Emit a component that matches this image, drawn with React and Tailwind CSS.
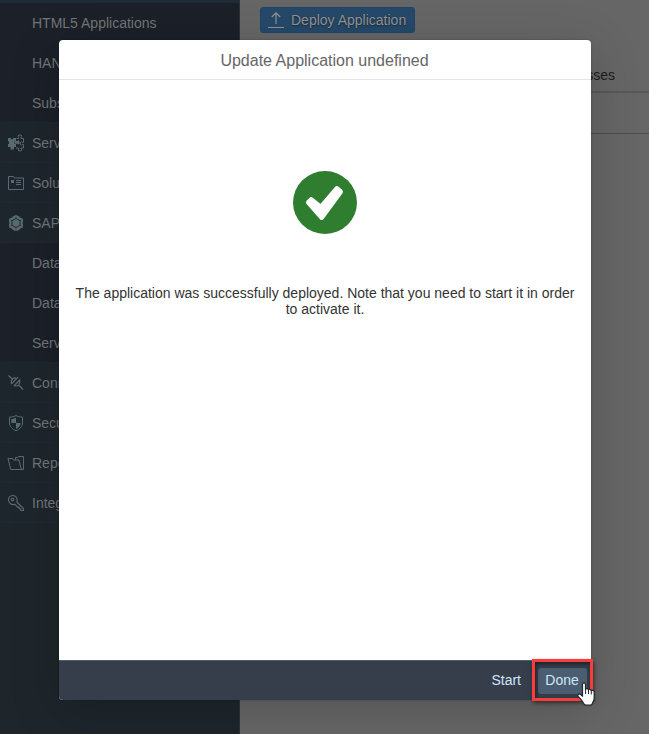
import React from "react";

const PuzzleIcon = () => (
  <svg width="18" height="18" viewBox="0 0 18 18" className="shrink-0">
    <path d="M1 4h3v1.200h2V4h3v3H7.500v3H9v3H7v2.500H3.500V13H1v-3h1V7.500H1z" fill="currentColor" />
    <path d="M9.500 4.500h2.300V3.200l-.9-.9.8-1.300h2.400l.7 1.300-.8.900v1.300h2.500v4h-1.300l-.9-.8-1 .8v2l1 .8.900-.8h1.300V14h-2.500v1l.8.900-.7 1h-2.300l-.8-1 .8-.900v-1H9" fill="none" stroke="currentColor" strokeWidth="1" />
    <path d="M8 7h2.500l.8-.8 1.200 1v2.400l-1.200.900-.8-.7H8z" fill="currentColor" />
  </svg>
);

const SolutionIcon = () => (
  <svg width="18" height="18" viewBox="0 0 18 18" fill="none" stroke="currentColor" className="shrink-0">
    <path d="M1.500 15.500v-13h5l1 1.500h9v11.500z" />
    <path d="M9 6.500h5M9 8.500h5M9 10.500h5" />
    <rect x="4" y="6" width="3" height="3" fill="currentColor" stroke="none" />
  </svg>
);

const HexIcon = () => (
  <svg width="18" height="18" viewBox="0 0 18 18" className="shrink-0">
    <path d="M9 1l3 1.200 1 1.300 3 1.200v3L15.500 9l.5 1.500v2.800l-3 1.400-1 1.300L9 17l-3-1-1-1.300-3-1.400v-2.800L2.500 9 2 7.700v-3l3-1.200 1-1.300z" fill="currentColor" />
    <path d="M9 4.500l4 2.200v4.600l-4 2.200-4-2.200V6.700z" fill="none" stroke="#1c242b" strokeWidth=".9" />
    <path d="M9 4.500V3M13 6.700l1.500-.9M13 11.300l1.500.900M9 13.500V15M5 11.300l-1.500.9M5 6.700l-1.500-.9" stroke="#1c242b" strokeWidth=".7" />
  </svg>
);

const ConnectIcon = () => (
  <svg width="18" height="18" viewBox="0 0 18 18" fill="none" stroke="currentColor" strokeWidth="1.200" className="shrink-0">
    <path d="M1.500 1.500L5 4.700M12.300 11.500l3.700 4" />
    <path d="M11 3.200L4.300 10M13.300 5.500L6.800 12" />
    <path d="M9.300 4.500C7 3 3.500 5 4.500 9.500M7.500 11.500c3.500 1.600 6-1 5-5" />
  </svg>
);

const ShieldIcon = () => (
  <svg width="18" height="18" viewBox="0 0 18 18" className="shrink-0">
    <path d="M9 1.500c2 1.300 4.200 1.600 6.500 1.600V9c0 3.500-2.500 5.800-6.500 7.800C5 14.800 2.500 12.500 2.500 9V3.100c2.300 0 4.500-.3 6.500-1.600z" fill="none" stroke="currentColor" />
    <path d="M9 3.500V9H4.300V5c1.700 0 3.200-.5 4.700-1.500zM9 9h4.700c0 2.600-1.700 4.400-4.700 6z" fill="currentColor" />
  </svg>
);

const FolderIcon = () => (
  <svg width="18" height="18" viewBox="0 0 18 18" fill="none" stroke="currentColor" className="shrink-0">
    <path d="M3.800 15.500L1 4.500h4.500l1 1.500H12l2.300 9.500zM8.500 6V3.500h2.200l.8-1h5v13h-2.200" />
  </svg>
);

const KeyIcon = () => (
  <svg width="18" height="18" viewBox="0 0 18 18" fill="none" stroke="currentColor" strokeWidth="1.100" className="shrink-0">
    <path d="M9.800 8l6.700 6.500v2h-2.700v-1.700h-1.600v-1.700h-1.600L8 10.300C4.800 11.600 1.500 9 1.500 5.900 1.500 3.400 3.500 1.500 5.900 1.500c3 0 5 3.300 3.900 6.500z" />
    <circle cx="5.500" cy="5.500" r="1.300" />
  </svg>
);

const items = [
  { label: "HTML5 Applications", sub: true },
  { label: "HANA", sub: true },
  { label: "Subscr", sub: true, last: true },
  { label: "Servic", Icon: PuzzleIcon },
  { label: "Soluti", Icon: SolutionIcon },
  { label: "SAP", Icon: HexIcon },
  { label: "Data", sub: true },
  { label: "Data", sub: true },
  { label: "Servi", sub: true, last: true },
  { label: "Conn", Icon: ConnectIcon },
  { label: "Secur", Icon: ShieldIcon },
  { label: "Repo", Icon: FolderIcon },
  { label: "Integ", Icon: KeyIcon },
];

function Sidebar() {
  return (
    <aside className="w-[240px] shrink-0 border-r border-[#2b3238] bg-[#1e262b] text-[14px] text-[#737576]">
      <div className="h-[3px] bg-[#1f2c38]" />
      {items.map(({ label, sub, last, Icon }, i) => (
        <div
          key={i}
          className={`flex h-10 items-center whitespace-nowrap border-b pl-[7px] pt-px ${
            sub ? "bg-[#1b2029]" : "bg-[#1e262d]"
          } ${sub && !last ? "border-transparent" : "border-[#20292f]"}`}
        >
          <span className="flex w-[25px] text-[#5a6a73]">{Icon && <Icon />}</span>
          <span className="pt-px">{label}</span>
        </div>
      ))}
    </aside>
  );
}

function MainPage() {
  return (
    <main className="flex grow flex-col bg-[#666666]">
      <div className="flex h-[41px] items-start pl-5 pt-[7px]">
        <button className="flex h-[26px] w-[155px] items-center rounded-[3px] border border-[#1f4668] bg-[#26496a] pl-[6px] text-[14px] whitespace-nowrap text-[#929292] [text-shadow:0_1px_2px_rgba(0,0,0,0.5)]">
          <svg width="18" height="18" viewBox="0 0 18 18" fill="none" stroke="currentColor" strokeWidth="1.200" className="mr-[6px] shrink-0">
            <path d="M1 16.500h16M9 13V2M4.800 6L9 1.800 13.200 6" />
          </svg>
          Deploy Application
        </button>
      </div>
      <div className="flex h-[52px] items-center justify-end border-b-2 border-[#585858] pr-[34px] pt-[18px] text-[14px] text-[#1c1c1c]">
        sses
      </div>
      <div className="h-[41px] border-b border-[#4c4c4c]" />
    </main>
  );
}

function Dialog() {
  return (
    <section className="absolute left-[59px] top-10 flex h-[660px] w-[532px] flex-col rounded-[4px] bg-white shadow-[0_0_2px_rgba(0,0,0,0.3),0_10px_50px_rgba(0,0,0,0.18)]">
      <header className="flex h-10 items-center justify-center border-b border-[#e5e5e5] pt-[2px] pr-px text-[16px] text-[#666666]">
        Update Application undefined
      </header>
      <div className="flex grow flex-col items-center pt-[91px]">
        <svg width="64" height="64" viewBox="0 0 64 64">
          <ellipse cx="32" cy="31.500" rx="32" ry="31.500" fill="#2f7d2f" />
          <path
            d="M15.500 31.300l2.700-2.500 9.700 7.700L43.900 17.800l3.500 3L28.700 46.300z"
            fill="#fff"
            stroke="#fff"
            strokeWidth="5.200"
            strokeLinejoin="round"
          />
        </svg>
        <p className="mt-[50px] text-center text-[14px] leading-4 text-[#333333]">
          The application was successfully deployed. Note that you need to start it in order
          <br />
          to activate it.
        </p>
      </div>
      <footer className="flex h-10 items-center justify-end rounded-b-[4px] border-t border-[#496072] bg-[#353e4a] pr-1 text-[14px] text-[#d0e5f8]">
        <button className="pl-4 pr-[17px]">Start</button>
        <button className="h-[26px] w-[49px] rounded-[3px] bg-[#4b5d70] pr-px">Done</button>
      </footer>
    </section>
  );
}

export default function App() {
  return (
    <div className="relative flex h-[734px] w-[649px] overflow-hidden font-['Liberation_Sans',Arial,sans-serif]">
      <Sidebar />
      <MainPage />
      <Dialog />
      <div className="absolute left-[532px] top-[659px] h-[42px] w-[61px] border-[3px] border-[#f93c3c] shadow-[1px_2px_4px_rgba(0,0,0,0.5),inset_1px_2px_4px_rgba(0,0,0,0.5)]" />
      <svg width="20" height="25" viewBox="0 0 20 25" className="absolute left-[576px] top-[682px]">
        <path
          d="M6.500 2.500C6.500.4 9.500.4 9.500 2.500V7c.9-.8 2.600-.5 2.900.6.900-.7 2.400-.4 2.700.8 1.500-.6 3.100.2 3.100 1.900V16c0 2.500-1.300 3.500-1.700 5.200-.4 1.300-1.200 2-2.500 2h-3.500c-1.600 0-2.500-.8-3.100-2.200C6.300 18.600 4.500 17 2.300 14.600c-1.400-1.600.4-3.400 2-2.300l2.200 1.700z"
          fill="#fff"
          stroke="#1e2430"
          strokeWidth="1.200"
        />
        <path d="M9.600 7v5M12.500 7.800V12M15.300 8.800V12.500" stroke="#1e2430" strokeWidth="1" />
      </svg>
    </div>
  );
}
